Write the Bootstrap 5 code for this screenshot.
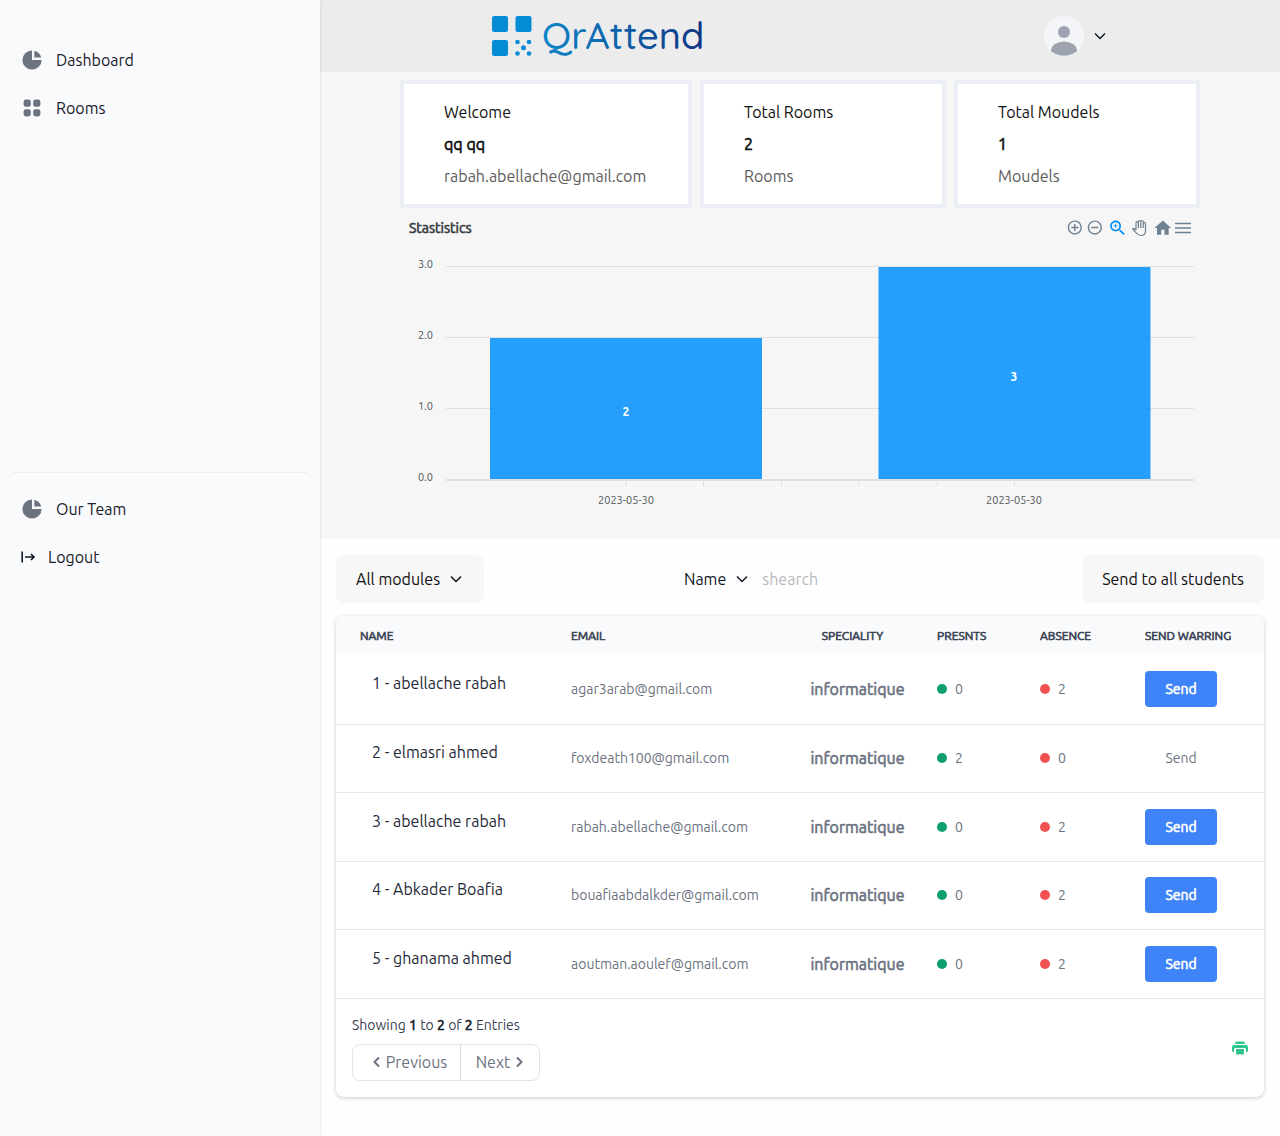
<!DOCTYPE html>
<html lang="en">
<head>
<meta charset="utf-8">
<meta name="viewport" content="width=device-width, initial-scale=1">
<title>QrAttend</title>
<link href="https://cdn.jsdelivr.net/npm/bootstrap@5.3.0/dist/css/bootstrap.min.css" rel="stylesheet">
<style>
body{font-family:Ubuntu,"Noto Sans",sans-serif;font-size:16px;line-height:24px;color:#111827;background:#fefefe}
button,input{font:inherit;color:inherit}
.side-panel{width:25%;min-width:160px;min-height:100vh;background:#f9fafc;padding:40px 12px;box-shadow:0 1px 3px #0000001f;z-index:1}
.side-main{min-height:432px}
.side-foot{border-top:1px solid #eceef1;padding-top:16px}
.side-list{gap:8px}
.side-link{padding:8px;color:#1a202c;text-decoration:none}
.side-link:hover{background:#eef0f3;color:#1a202c;border-radius:8px}
.side-link svg{fill:#6b7280}
.top-bar{height:72px;background:#ececec}
.brand-svg{display:block;width:208px;height:48px;overflow:visible}
.brand-svg text{font-family:Quicksand,Lato,sans-serif;font-size:38px;font-weight:500}
.plain{border:0;background:none;padding:0}
.thick{font-weight:400;-webkit-text-stroke:.6px currentColor}
.overview{background:#f6f6f6;padding:8px 80px 0}
.stat-grid{display:grid;grid-template-columns:292fr 246fr 246fr;gap:8px}
.stat-box{background:#fff;border:4px solid #eceef6;padding:16px 0 16px 40px;color:#111;gap:8px;height:128px}
.stat-box p{margin:0}
.stat-note{color:#5c5c5c}
.chart-head{height:40px;padding:0 8px 0 9px}
.chart-title{font-size:14px;color:#373d3f;margin:0}
.chart-tools svg{display:block}
.chart-svg{display:block;width:100%}
.chart-svg text{font-size:11px;fill:#50565a}
.chart-svg .bar-value{font-size:12px;font-weight:700;fill:#fff}
.students{padding:16px}
.soft-btn{background:#f7f7f8;border:0;border-radius:8px;padding:12px 20px;height:48px;color:#111}
.name-btn{height:48px;padding:0 0 0 20px}
.search-box{width:152px;border:0;background:transparent;padding:0 12px;outline-offset:-2px}
.search-box::placeholder{color:#b7b9bd;opacity:1}
.sheet{margin-top:13px;background:#fff;border-radius:8px;box-shadow:0 1px 4px #00000033;overflow:hidden}
.sheet-table{width:100%;min-width:780px;table-layout:fixed;color:#6b7280;font-size:14px}
.sheet-table th{height:39px;padding:0 16px;background:#f9fafc;color:#374151;font-size:12px;white-space:nowrap}
.sheet-table td{height:69px;padding:0 16px;border-bottom:1px solid #e8eaed;white-space:nowrap}
.sheet-table tr:nth-child(even) td{height:68px}
.c-name{width:219px}.c-mail{width:239px}.c-spec{width:127px}.c-pres{width:103px}.c-abs{width:105px}.c-send{width:135px}
.sheet-table th:first-child{padding-left:24px}
.sheet-table th.spec-head{padding-right:26px;text-align:center}
.sheet-table td.who{padding:0 0 12px 36px;color:#1f2937;font-size:16px}
.spec{font-size:16px;text-align:center}
.dot{display:inline-block;width:10px;height:10px;border-radius:50%;margin-right:8px}
.dot-in{background:#0e9f6e}.dot-out{background:#f05252}
.send-btn{border:0;border-radius:4px;width:72px;height:36px;font-size:14px}
.send-on{background:#3f83f8;color:#fff}
.send-off{background:none;color:#6b7280}
.sheet-foot{padding:16px}
.count-text{font-size:14px;line-height:21px;color:#374151;margin:0 0 8px}
.count-text b{color:#111827}
.pager{border:1px solid #e2e4e8;border-radius:8px;width:188px;height:37px;color:#6b7280}
.pager button+button{border-left:1px solid #d9dce1}
.pager .prev{width:107px;padding-left:6px}
.pager svg{fill:none;stroke:currentColor;stroke-width:2}
.chev{fill:none;stroke:currentColor;stroke-width:1.5}
</style>
</head>
<body>
<div class="d-flex">
  <nav class="side-panel flex-shrink-0 position-relative" aria-label="Main">
    <div class="side-main">
      <div class="side-list d-flex flex-column">
        <a href="#" class="side-link d-flex align-items-center"><svg class="me-2" width="24" height="24" viewBox="0 0 20 20"><path d="M2 10a8 8 0 018-8v8h8a8 8 0 11-16 0z"/><path d="M12 2.252A8.014 8.014 0 0117.748 8H12V2.252z"/></svg><span class="ms-1">Dashboard</span></a>
        <a href="#" class="side-link d-flex align-items-center"><svg class="me-2" width="24" height="24" viewBox="0 0 20 20"><path d="M5 3a2 2 0 00-2 2v2a2 2 0 002 2h2a2 2 0 002-2V5a2 2 0 00-2-2H5zM5 11a2 2 0 00-2 2v2a2 2 0 002 2h2a2 2 0 002-2v-2a2 2 0 00-2-2H5zM11 5a2 2 0 012-2h2a2 2 0 012 2v2a2 2 0 01-2 2h-2a2 2 0 01-2-2V5zM11 13a2 2 0 012-2h2a2 2 0 012 2v2a2 2 0 01-2 2h-2a2 2 0 01-2-2v-2z"/></svg><span class="ms-1">Rooms</span></a>
      </div>
    </div>
    <div class="side-foot side-list d-flex flex-column">
      <a href="#" class="side-link d-flex align-items-center"><svg class="me-2" width="24" height="24" viewBox="0 0 20 20"><path d="M2 10a8 8 0 018-8v8h8a8 8 0 11-16 0z"/><path d="M12 2.252A8.014 8.014 0 0117.748 8H12V2.252z"/></svg><span class="ms-1">Our Team</span></a>
      <a href="#" class="side-link d-flex align-items-center"><svg class="me-2" width="16" height="16" viewBox="0 0 16 16"><path d="M2.200 2.500v11M5 8h9M11 5l3 3-3 3" style="fill:none;stroke:#111827;stroke-width:1.600"/></svg><span class="ms-1">Logout</span></a>
    </div>
  </nav>

  <main class="flex-grow-1 overflow-hidden">
    <header class="top-bar d-flex align-items-center justify-content-around">
      <a href="#" aria-label="QrAttend home"><svg class="brand-svg" viewBox="0 0 208 48">
        <defs><linearGradient id="ink" gradientUnits="userSpaceOnUse" x1="50" x2="210" y1="0" y2="0"><stop offset="0" stop-color="#0c84c8"/><stop offset=".5" stop-color="#0e60a6"/><stop offset="1" stop-color="#0e3584"/></linearGradient></defs>
        <g fill="#068bd6"><rect y="4" width="16" height="16" rx="2"/><rect x="23.500" y="4" width="16" height="16" rx="2"/><rect y="28" width="16" height="16" rx="2"/><circle cx="25.500" cy="30" r="2.300"/><circle cx="37" cy="30" r="2.300"/><circle cx="31.500" cy="35.800" r="2.500"/><circle cx="25.500" cy="41.500" r="2.300"/><circle cx="37" cy="41.500" r="2.300"/></g>
        <text x="50" y="37" fill="url(#ink)">QrAttend</text></svg></a>
      <button class="plain d-flex align-items-center" aria-label="Account menu">
        <svg class="me-2" width="40" height="40" viewBox="0 0 40 40"><circle cx="20" cy="20" r="20" fill="#f3f5f8"/><circle cx="20" cy="16" r="6" fill="#9ca3af"/><path d="M7 35a13 9.500 0 0 1 26 0a20 20 0 0 1-26 0z" fill="#9ca3af"/></svg>
        <svg class="chev" width="16" height="16" viewBox="0 0 16 16"><path d="M3 5.500l5 5 5-5"/></svg>
      </button>
    </header>

    <section class="overview">
      <div class="stat-grid">
        <div class="stat-box d-flex flex-column"><p>Welcome</p><p class="thick">qq qq</p><p class="stat-note">rabah.abellache@gmail.com</p></div>
        <div class="stat-box d-flex flex-column"><p>Total Rooms</p><p class="thick">2</p><p class="stat-note">Rooms</p></div>
        <div class="stat-box d-flex flex-column"><p>Total Moudels</p><p class="thick">1</p><p class="stat-note">Moudels</p></div>
      </div>
      <div class="chart-head d-flex align-items-center justify-content-between">
        <h2 class="chart-title thick">Stastistics</h2>
        <div class="chart-tools d-flex align-items-center">
          <button class="plain" aria-label="Zoom in"><svg width="20" height="20" viewBox="-1 0 24 24" fill="#6e8192"><path d="M13 7h-2v4H7v2h4v4h2v-4h4v-2h-4V7zm-1-5C6.480 2 2 6.480 2 12s4.480 10 10 10 10-4.480 10-10S17.520 2 12 2zm0 18c-4.410 0-8-3.590-8-8s3.590-8 8-8 8 3.590 8 8-3.590 8-8 8z" transform="translate(1.800 1.200) scale(.85)"/></svg></button>
          <button class="plain" aria-label="Zoom out"><svg width="20" height="20" viewBox="-1 0 24 24" fill="#6e8192"><path d="M7 11v2h10v-2H7zm5-9C6.480 2 2 6.480 2 12s4.480 10 10 10 10-4.480 10-10S17.520 2 12 2zm0 18c-4.410 0-8-3.590-8-8s3.590-8 8-8 8 3.590 8 8-3.590 8-8 8z" transform="translate(1.800 1.200) scale(.85)"/></svg></button>
          <button class="plain" aria-label="Selection zoom"><svg width="24" height="20" viewBox="-4 0 28 24" fill="#008ffb"><path d="M15.500 14h-.79l-.28-.27C15.410 12.590 16 11.110 16 9.500 16 5.910 13.090 3 9.500 3S3 5.910 3 9.500 5.910 16 9.500 16c1.610 0 3.090-.59 4.230-1.570l.27.28v.79l5 4.990L20.490 19l-4.990-5zm-6 0C7.010 14 5 11.990 5 9.500S7.010 5 9.500 5 14 7.010 14 9.500 11.990 14 9.500 14z"/><path d="M12 10h-2v2H9v-2H7V9h2V7h1v2h2v1z"/></svg></button>
          <button class="plain" aria-label="Panning"><svg width="22" height="20" viewBox="-1 0 22 20" fill="none" stroke="#6e8192" stroke-width="1.200"><path d="M7 12V5q0-1.300 1.200-1.300T9.400 5v5V3.700q0-1.200 1.200-1.200t1.200 1.200V10V3.700q0-1.200 1.200-1.200t1.200 1.200V10V5.500q0-1.200 1.100-1.200t1.200 1.200V13q0 4.500-4.500 4.500-3 0-4.400-2.200L3.700 11q1-1 2-.2L7 12"/></svg></button>
          <button class="plain" aria-label="Reset zoom"><svg width="24" height="20" viewBox="-1 0 28 24" fill="#6e8192"><path d="M12 20v-6h4v6h5v-8h3L14 3 4 12h3v8z"/></svg></button>
          <button class="plain" aria-label="Menu"><svg width="18" height="20" viewBox="0 0 18 20" fill="none" stroke="#6e8192" stroke-width="1.700"><path d="M1 5.500h16M1 10h16M1 14.500h16"/></svg></button>
        </div>
      </div>
      <svg class="chart-svg" viewBox="0 0 800 291" role="img" aria-label="Attendance by date">
        <path d="M46 18.500H794M46 89.500H794M46 160.500H794" stroke="#e0e0e0"/>
        <path d="M46 232H794" stroke="#e0e0e0" stroke-width="2"/>
        <path d="M226 232v6M303.500 232v6M381.500 232v6M459 232v6M537 232v6M614.500 232v6" stroke="#e0e0e0"/>
        <g fill="#008ffb" fill-opacity=".85"><rect x="90" y="90" width="272" height="141"/><rect x="478.500" y="19" width="272" height="212"/></g>
        <g text-anchor="end"><text x="33" y="20">3.0</text><text x="33" y="91">2.0</text><text x="33" y="162">1.0</text><text x="33" y="233">0.0</text></g>
        <g text-anchor="middle"><text x="226" y="256">2023-05-30</text><text x="614" y="256">2023-05-30</text><text class="bar-value" x="226" y="168">2</text><text class="bar-value" x="614" y="133">3</text></g>
      </svg>
    </section>

    <section class="students">
      <div class="d-flex flex-wrap align-items-center justify-content-between">
        <button class="soft-btn d-flex align-items-center">All modules<svg class="chev ms-2" width="16" height="16" viewBox="0 0 16 16"><path d="M3 5.500l5 5 5-5"/></svg></button>
        <div class="d-flex align-items-center">
          <button class="plain name-btn d-flex align-items-center">Name<svg class="chev ms-2" width="16" height="16" viewBox="0 0 16 16"><path d="M3 5.500l5 5 5-5"/></svg></button>
          <input class="search-box" type="search" placeholder="shearch" aria-label="Search students">
        </div>
        <button class="soft-btn">Send to all students</button>
      </div>
      <div class="sheet">
        <div class="overflow-auto">
        <table class="sheet-table">
          <colgroup><col class="c-name"><col class="c-mail"><col class="c-spec"><col class="c-pres"><col class="c-abs"><col class="c-send"></colgroup>
          <thead class="thick"><tr><th class="thick">NAME</th><th class="thick">EMAIL</th><th class="thick spec-head">SPECIALITY</th><th class="thick">PRESNTS</th><th class="thick">ABSENCE</th><th class="thick">SEND WARRING</th></tr></thead>
          <tbody>
            <tr><td class="who">1 - abellache rabah</td><td>agar3arab@gmail.com</td><td class="spec thick">informatique</td><td><span class="dot dot-in"></span>0</td><td><span class="dot dot-out"></span>2</td><td><button class="send-btn send-on thick">Send</button></td></tr>
            <tr><td class="who">2 - elmasri ahmed</td><td>foxdeath100@gmail.com</td><td class="spec thick">informatique</td><td><span class="dot dot-in"></span>2</td><td><span class="dot dot-out"></span>0</td><td><button class="send-btn send-off">Send</button></td></tr>
            <tr><td class="who">3 - abellache rabah</td><td>rabah.abellache@gmail.com</td><td class="spec thick">informatique</td><td><span class="dot dot-in"></span>0</td><td><span class="dot dot-out"></span>2</td><td><button class="send-btn send-on thick">Send</button></td></tr>
            <tr><td class="who">4 - Abkader Boafia</td><td>bouafiaabdalkder@gmail.com</td><td class="spec thick">informatique</td><td><span class="dot dot-in"></span>0</td><td><span class="dot dot-out"></span>2</td><td><button class="send-btn send-on thick">Send</button></td></tr>
            <tr><td class="who">5 - ghanama ahmed</td><td>aoutman.aoulef@gmail.com</td><td class="spec thick">informatique</td><td><span class="dot dot-in"></span>0</td><td><span class="dot dot-out"></span>2</td><td><button class="send-btn send-on thick">Send</button></td></tr>
          </tbody>
        </table>
        </div>
        <div class="sheet-foot d-flex align-items-center justify-content-between">
          <div>
            <p class="count-text">Showing <b class="thick">1</b> to <b class="thick">2</b> of <b class="thick">2</b> Entries</p>
            <div class="pager d-flex">
              <button class="plain prev d-flex align-items-center justify-content-center"><svg class="me-1" width="10" height="12" viewBox="0 0 10 12"><path d="M7 1.500L2.500 6 7 10.500"/></svg>Previous</button>
              <button class="plain flex-grow-1 d-flex align-items-center justify-content-center">Next<svg class="ms-1" width="10" height="12" viewBox="0 0 10 12"><path d="M3 1.500L7.500 6 3 10.500"/></svg></button>
            </div>
          </div>
          <button class="plain" aria-label="Print"><svg class="d-block" width="16" height="16" viewBox="0 0 16 16" fill="#31c48d"><path d="M5 1.500h6a2 2 0 0 1 2 2V4H3v-.5a2 2 0 0 1 2-2zM2.500 5h11A2.500 2.500 0 0 1 16 7.500v3a1.500 1.500 0 0 1-1.500 1.500H14V9.500A1.500 1.500 0 0 0 12.500 8h-9A1.500 1.500 0 0 0 2 9.500V12h-.5A1.500 1.500 0 0 1 0 10.500v-3A2.500 2.500 0 0 1 2.500 5zM4 9h8v4a1.500 1.500 0 0 1-1.500 1.500h-5A1.500 1.500 0 0 1 4 13z"/></svg></button>
        </div>
      </div>
    </section>
  </main>
</div>
<script src="https://cdn.jsdelivr.net/npm/bootstrap@5.3.0/dist/js/bootstrap.bundle.min.js"></script>
</body>
</html>
